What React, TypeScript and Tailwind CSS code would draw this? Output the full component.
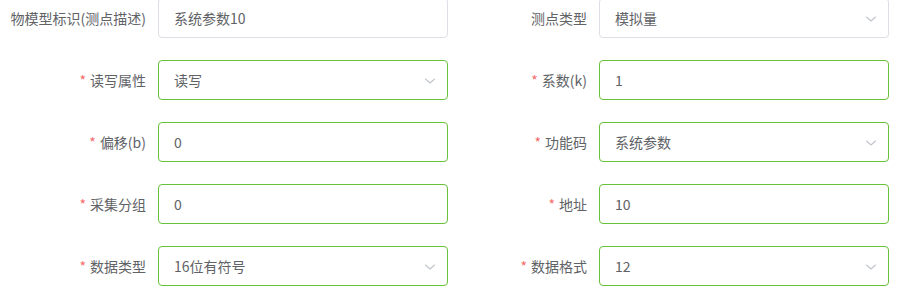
import React from 'react';

interface Field {
  label: string;
  value: string;
  required?: boolean;
  select?: boolean;
  plain?: boolean;
}

const fields: Field[] = [
  { label: '物模型标识(测点描述)', value: '系统参数10', plain: true },
  { label: '测点类型', value: '模拟量', select: true, plain: true },
  { label: '读写属性', value: '读写', required: true, select: true },
  { label: '系数(k)', value: '1', required: true },
  { label: '偏移(b)', value: '0', required: true },
  { label: '功能码', value: '系统参数', required: true, select: true },
  { label: '采集分组', value: '0', required: true },
  { label: '地址', value: '10', required: true },
  { label: '数据类型', value: '16位有符号', required: true, select: true },
  { label: '数据格式', value: '12', required: true, select: true },
];

const Chevron = () => (
  <svg width="12" height="12" viewBox="0 0 12 12" fill="none" className="absolute right-[11px] top-[14px]">
    <path d="M1.5 4 L6 8 L10.5 4" stroke="#c0c4cc" strokeWidth="1.1" strokeLinecap="round" strokeLinejoin="round" />
  </svg>
);

const FormItem: React.FC<{ field: Field }> = ({ field }) => (
  <div className="flex items-center h-[40px]">
    <label className="w-[158px] flex-none pr-[12px] text-right text-[14px] text-[#606266] whitespace-nowrap">
      {field.required && <span className="text-[#f56c6c] mr-[4px]">*</span>}
      {field.label}
    </label>
    <div
      className={`relative flex-none w-[290px] h-[40px] rounded-[4px] border bg-white flex items-center pl-[15px] text-[14px] text-[#606266] ${
        field.plain ? 'border-[#dcdfe6]' : 'border-[#67c23a]'
      }`}
    >
      {field.value}
      {field.select && <Chevron />}
    </div>
  </div>
);

export default function App() {
  return (
    <div
      className="w-[911px] h-[299px] overflow-hidden bg-white"
      style={{ fontFamily: '"Noto Sans CJK SC", "Noto Sans", sans-serif' }}
    >
      <div className="grid grid-cols-[441px_441px] gap-y-[22px] -mt-[2px]">
        {fields.map((f) => (
          <FormItem key={f.label} field={f} />
        ))}
      </div>
    </div>
  );
}
